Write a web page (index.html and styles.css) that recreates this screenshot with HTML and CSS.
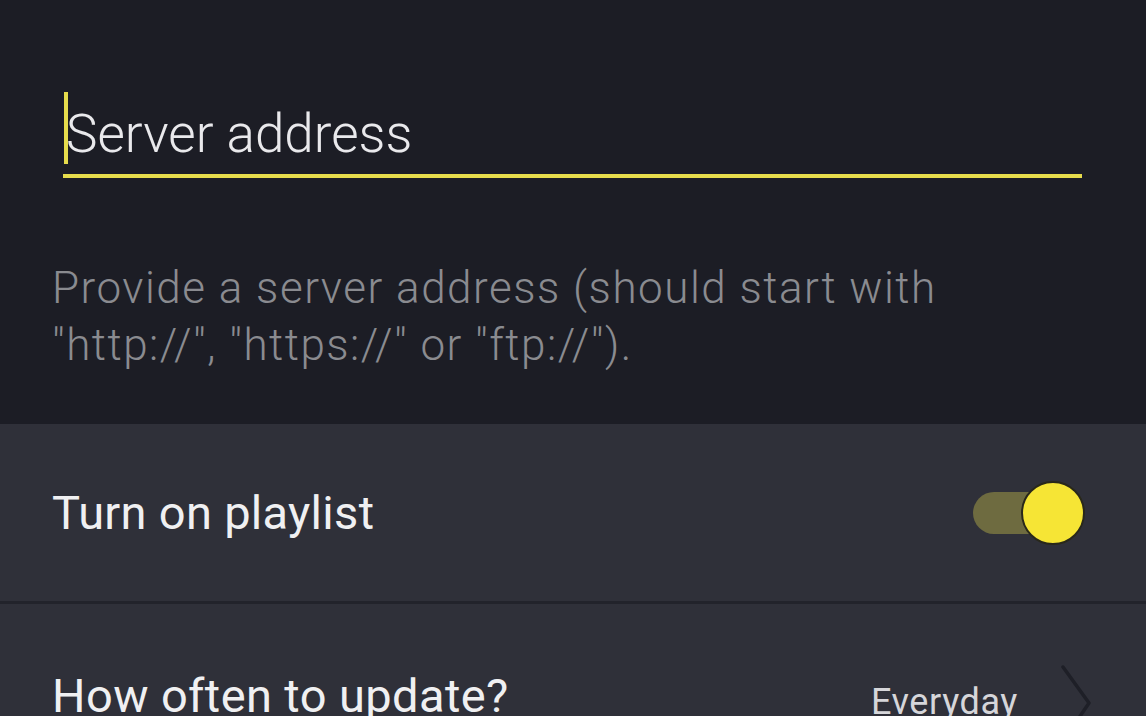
FILE: index.html
```html
<!DOCTYPE html>
<html>
<head>
<meta charset="utf-8">
<link rel="stylesheet" href="styles.css">
</head>
<body>
<div class="screen">
  <section class="top">
    <div class="field">
      <span class="caret"></span>
      <span class="field-text">Server address</span>
    </div>
    <p class="helper">Provide a server address (should start with<br>"http://", "https://" or "ftp://").</p>
  </section>
  <section class="list">
    <div class="row row-toggle">
      <span class="row-label">Turn on playlist</span>
      <span class="switch"><span class="track"></span><span class="thumb"></span></span>
    </div>
    <div class="divider"></div>
    <div class="row row-nav">
      <span class="row-label">How often to update?</span>
      <span class="row-value">Everyday</span>
      <svg class="chevron" width="40" height="70" viewBox="0 0 40 70"><path d="M5 4 L31 40 L12 68" fill="none" stroke="#1e1f27" stroke-width="3.5" stroke-linecap="round" stroke-linejoin="round"/></svg>
    </div>
  </section>
</div>
</body>
</html>
```
FILE: styles.css
```css
html, body {
  margin: 0;
  padding: 0;
  background: #2f3039;
}
.screen {
  width: 1146px;
  height: 716px;
  overflow: hidden;
  font-family: Roboto, "Liberation Sans", sans-serif;
}
.top {
  background: #1c1d25;
  height: 424px;
  box-sizing: border-box;
  padding-top: 95px;
  overflow: hidden;
}
.field {
  position: relative;
  margin-left: 63px;
  width: 1019px;
  height: 84px;
  box-sizing: border-box;
  border-bottom: 4px solid #e6dc4c;
  padding-left: 3px;
}
.caret {
  position: absolute;
  left: 1px;
  top: -2px;
  width: 4px;
  height: 72px;
  background: #e6dc4c;
}
.field-text {
  display: block;
  font-weight: 300;
  font-size: 53px;
  line-height: 80px;
  color: #e9e9ec;
  margin-top: -1px;
}
.helper {
  margin: 82px 0 0 52px;
  font-weight: 300;
  font-size: 44px;
  letter-spacing: 1.5px;
  line-height: 57px;
  color: #8a8b90;
}
.list {
  background: #2f3039;
}
.row {
  display: flex;
  align-items: center;
  padding: 0 62px 0 52px;
  color: #f0f0f2;
}
.row-toggle {
  height: 177px;
}
.row-label {
  font-size: 47px;
  letter-spacing: 0.3px;
  flex: 1;
}
.divider {
  height: 3px;
  background: #22232b;
}
.switch {
  position: relative;
  width: 112px;
  height: 64px;
  display: flex;
  align-items: center;
  margin-right: -1px;
}
.track {
  width: 88px;
  height: 42px;
  border-radius: 21px;
  background: #6e6b40;
}
.thumb {
  position: absolute;
  right: 0;
  top: 0;
  width: 60px;
  height: 60px;
  border-radius: 50%;
  background: #f6e535;
  border: 2px solid #29281a;
}
.row-nav {
  height: 190px;
  align-items: flex-start;
  padding: 62px 48px 0 52px;
  box-sizing: border-box;
}
.row-nav .row-label {
  line-height: 60px;
  letter-spacing: 0.4px;
}
.row-value {
  font-size: 36px;
  letter-spacing: 0.6px;
  line-height: 60px;
  color: #d6d6da;
  margin-top: 6px;
}
.chevron {
  margin-left: 40px;
  margin-top: -3px;
}
```
